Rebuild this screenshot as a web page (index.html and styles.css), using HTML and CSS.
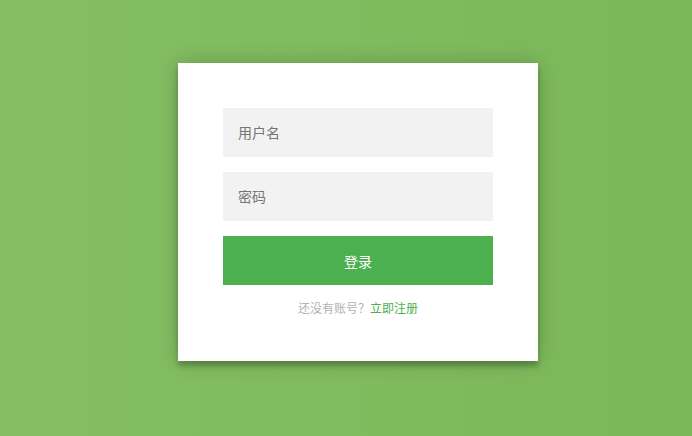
FILE: index.html
```html
<!DOCTYPE html>
<html lang="zh-CN">
<head>
<meta charset="utf-8">
<title>登录</title>
<link rel="stylesheet" href="styles.css">
</head>
<body>
<div class="login-page">
  <form class="form">
    <input class="field" type="text" placeholder="用户名">
    <input class="field" type="password" placeholder="密码">
    <button class="btn" type="button">登录</button>
    <p class="message">还没有账号？<a href="#">立即注册</a></p>
  </form>
</div>
</body>
</html>
```

FILE: styles.css
```css
html, body {
  margin: 0;
  height: 100%;
}
body {
  background: linear-gradient(to left, #7bb859, #85be64);
  font-family: Roboto, "Noto Sans CJK SC", sans-serif;
  overflow: hidden;
}
.login-page {
  padding: 63px 0 0 24px;
  display: flex;
  justify-content: center;
}
.form {
  width: 360px;
  box-sizing: border-box;
  background: #fff;
  padding: 45px;
  margin: 0;
  text-align: center;
  box-shadow: 0 0 20px rgba(0,0,0,0.2), 0 5px 5px rgba(0,0,0,0.24);
  display: flex;
  flex-direction: column;
}
.field {
  font-family: inherit;
  outline: 0;
  background: #f2f2f2;
  width: 100%;
  border: 0;
  margin: 0 0 15px;
  padding: 0 15px;
  height: 49px;
  box-sizing: border-box;
  font-size: 14px;
  color: #333;
}
.field::placeholder {
  color: #757575;
}
.btn {
  font-family: inherit;
  outline: 0;
  background: #4caf50;
  width: 100%;
  border: 0;
  height: 49px;
  padding: 0;
  color: #fff;
  font-size: 14px;
  cursor: pointer;
}
.message {
  margin: 16px 0 0;
  color: #b3b3b3;
  font-size: 12px;
  line-height: 16px;
  height: 15px;
}
.message a {
  color: #4caf50;
  text-decoration: none;
}
```
